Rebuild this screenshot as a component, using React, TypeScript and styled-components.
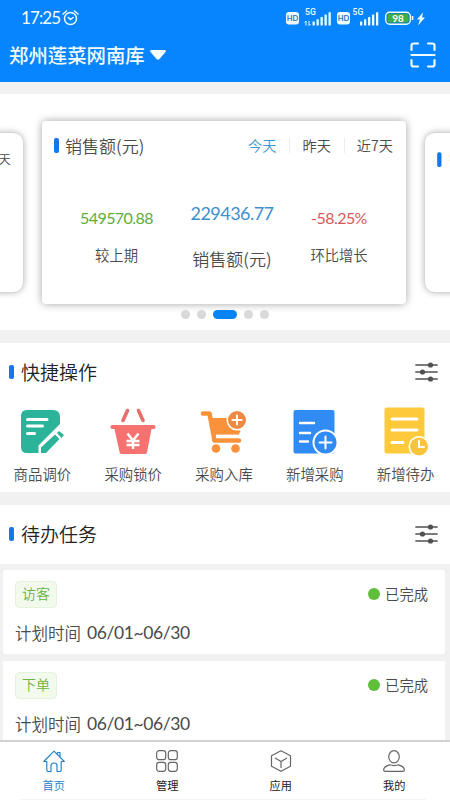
import React from 'react';
import styled, { createGlobalStyle, css } from 'styled-components';

const GlobalStyle = createGlobalStyle`
  * { box-sizing: border-box; }
  body { margin: 0; background: #f1f1f1; }
`;

const cjk = `'Noto Sans CJK SC', sans-serif`;
const latin = `Lato, 'Noto Sans CJK SC', sans-serif`;

const Screen = styled.div`
  width: 450px;
  height: 800px;
  overflow: hidden;
  display: flex;
  flex-direction: column;
  background: #f1f1f1;
  color: #4a4a4a;
  font-family: ${cjk};
  font-weight: 350;
  white-space: nowrap;
`;

const Header = styled.header`
  height: 82px;
  flex: none;
  background: #0784ff;
  color: #f2fcff;
`;

const StatusBar = styled.div`
  height: 34px;
  padding: 2px 24px 0 21px;
  display: flex;
  align-items: center;
`;

const Clock = styled.span`
  width: 38px;
  font: 400 17px/20px ${latin};
  letter-spacing: -0.9px;
  margin-right: 3px;
`;

const StatusIcons = styled.div`
  margin-left: auto;
  display: flex;
`;

const TitleBar = styled.div`
  height: 42px;
  padding: 0 14px 0 9px;
  display: flex;
  align-items: center;
  justify-content: space-between;
`;

const StoreName = styled.div`
  display: flex;
  align-items: center;
  gap: 5px;
  font-size: 19.4px;
  font-weight: 500;
  line-height: 28px;
`;

const Carousel = styled.section`
  margin-top: 12px;
  height: 236px;
  flex: none;
  background: #fff;
  overflow: hidden;
  padding-top: 27px;
`;

const Slides = styled.div`
  display: flex;
  justify-content: center;
  margin-left: -2px;
  height: 183px;
`;

type Side = 'left' | 'right';

const Slide = styled.article<{ $side?: Side }>`
  width: 364px;
  height: 183px;
  flex: none;
  background: #fff;
  border-radius: 4px;
  box-shadow: 0 0 9px rgba(0, 0, 0, 0.36);
  ${p => p.$side && css`
    margin: 0 -5px;
    transform: scale(0.868);
    border-radius: 11px;
  `}
`;

const SlideHead = styled.div<{ $side?: Side }>`
  display: flex;
  align-items: center;
  padding: ${p => (p.$side ? '7px 14px 0 14px' : '0 13px 0 12px')};
  gap: ${p => (p.$side ? 9 : 6)}px;
  height: ${p => (p.$side ? 53 : 49)}px;
`;

const Marker = styled.i<{ $h?: number }>`
  width: 5px;
  height: ${p => p.$h ?? 15}px;
  border-radius: 2px;
  background: #1877e8;
`;

const MetricName = styled.span`
  font-size: 17px;
  line-height: 24px;
`;

const Ranges = styled.div`
  margin-left: auto;
  display: flex;
  align-items: center;
  font-size: 14.2px;
  line-height: 20px;
  padding-bottom: 1px;
`;

const Range = styled.span<{ $active?: boolean }>`
  color: ${p => (p.$active ? '#3e96d2' : '#4a4a4a')};
  & + & {
    margin-left: 13px;
    padding-left: 13px;
    background: linear-gradient(#ececec, #ececec) left center / 1px 15px no-repeat;
  }
`;

const Metrics = styled.div`
  display: flex;
  padding-top: 31px;
`;

const Metric = styled.div<{ $w: number; $main?: boolean }>`
  width: ${p => p.$w}px;
  display: flex;
  flex-direction: column;
  align-items: center;
  font-size: ${p => (p.$main ? 17 : 14.3)}px;
  line-height: 20px;
  gap: ${p => (p.$main ? 26 : 17)}px;
  padding-top: ${p => (p.$main ? 2 : 7)}px;
`;

const Value = styled.span<{ $c: string; $size: number }>`
  color: ${p => p.$c};
  font: 400 ${p => p.$size}px/20px ${latin};
  letter-spacing: -0.55px;
`;

const Dots = styled.div`
  display: flex;
  gap: 7px;
  justify-content: center;
  margin-top: 6px;
`;

const Dot = styled.i<{ $on?: boolean }>`
  width: ${p => (p.$on ? 24 : 9)}px;
  height: 9px;
  border-radius: 5px;
  background: ${p => (p.$on ? '#0784f4' : '#d9d9d9')};
`;

const Panel = styled.section<{ $h: number }>`
  margin-top: 13px;
  height: ${p => p.$h}px;
  flex: none;
  background: #fff;
`;

const PanelHead = styled.div`
  height: 58px;
  padding: 0 12px 0 9px;
  display: flex;
  align-items: center;
  gap: 7px;
  svg { margin-left: auto; }
`;

const PanelTitle = styled.h2`
  margin: 0;
  color: #222;
  font-size: 19px;
  font-weight: 350;
  line-height: 28px;
`;

const Shortcuts = styled.div`
  display: flex;
  margin: 0 -1px 0 -3px;
`;

const Shortcut = styled.div`
  flex: 1;
  display: flex;
  flex-direction: column;
  align-items: center;
  padding-top: 3px;
  font-size: 14.4px;
  line-height: 20px;
  gap: 7px;
`;

const Task = styled.article`
  margin: 6px 5px 1px 3px;
  height: 84px;
  flex: none;
  padding: 11px 17px 0 12px;
  border-radius: 2px;
  background: #fff;
`;

const TaskTop = styled.div`
  display: flex;
  justify-content: space-between;
  align-items: center;
`;

const Tag = styled.span`
  width: 42px;
  height: 27px;
  border: 1px solid #e4f3dc;
  border-radius: 4px;
  background: #f2faee;
  color: #6ab342;
  font-size: 14px;
  line-height: 23px;
  text-align: center;
`;

const State = styled.span`
  display: flex;
  align-items: center;
  gap: 5px;
  padding-bottom: 2px;
  font-size: 14.3px;
  line-height: 20px;
  &::before {
    content: '';
    width: 12px;
    height: 12px;
    border-radius: 50%;
    background: #5fbf3b;
  }
`;

const Plan = styled.div`
  display: flex;
  gap: 6px;
  margin-top: 13px;
  font-size: 16.5px;
  line-height: 24px;
`;

const Dates = styled.span`
  font: 400 17.5px/24px ${latin};
  letter-spacing: -0.4px;
`;

const TabBar = styled.nav`
  position: fixed;
  left: 0;
  top: 740px;
  width: 450px;
  height: 60px;
  padding: 8px 0 0;
  border-top: 2px solid #d2d2d2;
  background: #fff;
  display: flex;
  overflow: hidden;
  &::after {
    content: '';
    position: absolute;
    left: 20px;
    right: 24px;
    bottom: 0;
    height: 1px;
    background: #f4f4f4;
  }
`;

const Tabs = styled.div`
  display: flex;
  width: 454px;
  flex: none;
  margin-left: -3px;
`;

const Tab = styled.div<{ $active?: boolean }>`
  flex: 1;
  display: flex;
  flex-direction: column;
  align-items: center;
  gap: 4px;
  font: 400 11.2px/18px ${cjk};
  color: ${p => (p.$active ? '#2585cc' : '#222')};
  svg { color: ${p => (p.$active ? '#2585cc' : '#666')}; }
`;

const Signal = ({ x, data }: { x: number; data?: boolean }) => (
  <g>
    <text x={x} y="10.5" fontFamily="Roboto" fontWeight="500" fontSize="8.6" fill="#eaffff">5G</text>
    {[0, 1, 2, 3, 4].map(i => (
      <rect key={i} x={x + 7.5 + i * 4} y={17 - i * 2.3} width="2.3" height={4 + i * 2.3} rx=".5" fill="#eaffff" />
    ))}
    {data && <path d={`M${x + 1} 16.500v4.500M${x + 4} 16.500v4.500M${x - 0.5} 18l1.500-1.500M${x + 5.5} 19.500l-1.500 1.500`} stroke="#eaffff" strokeWidth="1" />}
  </g>
);

const Hd = ({ x }: { x: number }) => (
  <g>
    <rect x={x} y="8" width="13" height="12.5" rx="3" fill="#f0fcff" />
    <text x={x + 6.5} y="17" textAnchor="middle" fontFamily="Lato" fontWeight="700" fontSize="7.5" fill="#2d75b8">HD</text>
  </g>
);

const StatusDrawing = () => (
  <svg width="141" height="28" viewBox="0 0 141 28" overflow="visible">
    <Hd x={1} />
    <g transform="translate(0 .5)"><Signal x={20} data /></g>
    <Hd x={52} />
    <g transform="translate(0 .5)"><Signal x={67.5} /></g>
    <rect x="100.700" y="8.200" width="24.600" height="12" rx="4" fill="#187bc4" stroke="#eaffff" strokeWidth="1.400" />
    <rect x="102.500" y="9.800" width="21" height="8.800" rx="2.300" fill="#3fae45" />
    <path d="M127.500 12v4" stroke="#eaffff" strokeWidth="1.700" />
    <text x="113" y="17.800" textAnchor="middle" fontFamily="Lato" fontWeight="700" fontSize="10" fill="#fff">98</text>
    <path d="M138 8.500l-6 7h3l-2 6 7-8h-3z" fill="#f4feff" />
  </svg>
);

const Alarm = () => (
  <svg width="18" height="18" viewBox="0 0 18 18" fill="none" stroke="#eaffff" strokeWidth="1.5" strokeLinecap="round">
    <circle cx="8.5" cy="9.5" r="6" />
    <path d="M1 5L4.500 2M16 5L12.500 2M6.300 8.500l2.200 2 2.500-2" />
  </svg>
);

const Scan = () => (
  <svg width="26" height="26" viewBox="0 0 26 26" fill="none" stroke="#f0fcff" strokeWidth="2.2" strokeLinecap="round">
    <path d="M1.500 8V3.500a2 2 0 0 1 2-2H8M18 1.500h4.500a2 2 0 0 1 2 2V8M24.500 18v4.500a2 2 0 0 1-2 2H18M8 24.500H3.500a2 2 0 0 1-2-2V18M1.500 13h23" />
  </svg>
);

const Sliders = () => (
  <svg width="23" height="20" viewBox="0 0 23 20" stroke="#505050" strokeWidth="1.7" strokeLinecap="round">
    <path d="M1 3h21M1 10h21M1 17h21" />
    <g fill="#505050" stroke="none"><circle cx="15.500" cy="3" r="2.600" /><circle cx="7.500" cy="10" r="2.600" /><circle cx="15.500" cy="17" r="2.600" /></g>
  </svg>
);

const shortcuts = [
  {
    name: '商品调价',
    art: <>
      <path d="M10 6h26q7 0 7 7v7L21.500 41.500V49H10q-6 0-6-6V12q0-6 6-6z" fill="#2cb49a" />
      <path d="M10.500 15.500h19.500M10.500 22h15M10.500 29.500h7" stroke="#fff" strokeWidth="3" strokeLinecap="round" />
      <path d="M24 49v-5.500L38 30.500l4.500 4.500L29 49zM40 29l2-2 5 4-2.500 3z" fill="#2cb49a" />
    </>,
  },
  {
    name: '采购锁价',
    art: <>
      <path d="M19.500 6.500l-4.500 10M30.500 6.500l4.500 10" stroke="#e56f6c" strokeWidth="3.600" strokeLinecap="round" />
      <path d="M4 21h42q1.500 0 1.500 2t-1.500 2h-2.500L39 48.500q-.5 1.500-2 1.500H14q-2 0-2.300-1.500L6.500 25H4q-1.500 0-1.500-2T4 21z" fill="#f57270" />
      <path d="M19.500 29.500l5.500 7 5.500-7M18.500 37h13M18.500 41h13M25 36v9" stroke="#fff" strokeWidth="2.500" fill="none" />
    </>,
  },
  {
    name: '采购入库',
    art: <>
      <path d="M4 9.500h6.500L15.500 36.500H40" fill="none" stroke="#fa923c" strokeWidth="4.500" strokeLinejoin="round" strokeLinecap="round" />
      <path d="M11.500 14H30q0 10 10 12l1.500 1-2 4H14z" fill="#fa923c" />
      <path d="M17 32h22" stroke="#fff" strokeWidth="2.800" />
      <circle cx="17" cy="44.500" r="4.300" fill="#fa923c" /><circle cx="36.500" cy="44.500" r="4.300" fill="#fa923c" />
      <circle cx="38" cy="16" r="10.500" fill="#fff" /><circle cx="38" cy="16" r="9" fill="#f08a43" />
      <path d="M33.500 16h9M38 11.500v9" stroke="#fff" strokeWidth="2" strokeLinecap="round" />
    </>,
  },
  {
    name: '新增采购',
    art: <>
      <rect x="3.500" y="6" width="41" height="43.500" rx="2" fill="#318bf5" />
      <path d="M10 19h14M10 29h10M10 37.500h8" stroke="#fff" strokeWidth="2.500" strokeLinecap="round" />
      <circle cx="35.500" cy="38.500" r="13" fill="#fff" /><circle cx="35.500" cy="38.500" r="11" fill="#318bf5" />
      <path d="M29.500 38.500h12M35.500 32.500v12" stroke="#fff" strokeWidth="2" strokeLinecap="round" />
    </>,
  },
  {
    name: '新增待办',
    art: <>
      <rect x="3.500" y="3.500" width="40" height="46" rx="2" fill="#fec93b" />
      <path d="M11 15h25M11 26h25M11 38.500h11" stroke="#fff" strokeWidth="3" strokeLinecap="round" />
      <circle cx="38" cy="42.500" r="10.500" fill="#fff" /><circle cx="38" cy="42.500" r="9" fill="#f9c33b" />
      <path d="M38 37v6H43" fill="none" stroke="#fff" strokeWidth="2" strokeLinecap="round" />
    </>,
  },
];

const tabs = [
  { name: '首页', art: <path d="M3.800 11.500H.7L11 1.200 21.300 11.500H18.200V20q0 1.500-1.500 1.500H14v-6q0-2.500-3-2.500t-3 2.500v6H5.300q-1.500 0-1.500-1.500zM14.500 4.500V2.500H17V7" /> },
  { name: '管理', art: <><rect x=".7" y=".7" width="9" height="9" rx="2.500" /><rect x="12.300" y=".7" width="9" height="9" rx="2.500" /><rect x=".7" y="12.300" width="9" height="9" rx="2.500" /><rect x="12.300" y="12.300" width="9" height="9" rx="2.500" /></> },
  { name: '应用', art: <path d="M11 .8l9.500 5v10.500L11 21.300l-9.500-5V5.800zM5 8l6 3.500L17 8M11 11.500V18" /> },
  { name: '我的', art: <><ellipse cx="11" cy="6.800" rx="5.300" ry="6.100" /><path d="M6.500 14.800Q.6 16.500.6 20q0 1.400 1.800 1.400h17.200q1.800 0 1.800-1.400 0-3.500-5.900-5.200-4.500 1.500-9 0z" /></> },
];

const SalesSlide = ({ side }: { side?: Side }) => (
  <Slide $side={side}>
    <SlideHead $side={side}>
      {side !== 'left' && <><Marker $h={side ? 17 : 15} /><MetricName>销售额(元)</MetricName></>}
      {side === 'left' && <Ranges><Range>近7天</Range></Ranges>}
      {!side && <Ranges><Range $active>今天</Range><Range>昨天</Range><Range>近7天</Range></Ranges>}
    </SlideHead>
    {!side && (
      <Metrics>
        <Metric $w={149}><Value $c="#5dad3a" $size={16}>549570.88</Value>较上期</Metric>
        <Metric $w={82} $main><Value $c="#3e8fce" $size={18}>229436.77</Value>销售额(元)</Metric>
        <Metric $w={132}><Value $c="#d75a5a" $size={16}>-58.25%</Value>环比增长</Metric>
      </Metrics>
    )}
  </Slide>
);

export default function App() {
  return (
    <Screen>
      <GlobalStyle />
      <Header>
        <StatusBar>
          <Clock>17:25</Clock>
          <Alarm />
          <StatusIcons><StatusDrawing /></StatusIcons>
        </StatusBar>
        <TitleBar>
          <StoreName>
            郑州莲菜网南库
            <svg width="16" height="10" viewBox="0 0 16 10"><path d="M1 0h14q1.500.5.5 2L9.500 9Q8 10.500 6.500 9L.5 2Q-.5.5 1 0z" fill="#f8ffff" /></svg>
          </StoreName>
          <Scan />
        </TitleBar>
      </Header>
      <Carousel>
        <Slides><SalesSlide side="left" /><SalesSlide /><SalesSlide side="right" /></Slides>
        <Dots><Dot /><Dot /><Dot $on /><Dot /><Dot /></Dots>
      </Carousel>
      <Panel $h={149}>
        <PanelHead><Marker $h={14} /><PanelTitle>快捷操作</PanelTitle><Sliders /></PanelHead>
        <Shortcuts>
          {shortcuts.map(s => (
            <Shortcut key={s.name}>
              <svg width="50" height="53" viewBox="0 0 50 53" fill="none">{s.art}</svg>
              {s.name}
            </Shortcut>
          ))}
        </Shortcuts>
      </Panel>
      <Panel $h={59}>
        <PanelHead><Marker $h={14} /><PanelTitle>待办任务</PanelTitle><Sliders /></PanelHead>
      </Panel>
      {['访客', '下单'].map(t => (
        <Task key={t}>
          <TaskTop><Tag>{t}</Tag><State>已完成</State></TaskTop>
          <Plan>计划时间<Dates>06/01~06/30</Dates></Plan>
        </Task>
      ))}
      <TabBar>
        <Tabs>
          {tabs.map((t, i) => (
            <Tab key={t.name} $active={i === 0}>
              <svg width="22" height="22" viewBox="0 0 22 22" fill="none" stroke="currentColor" strokeWidth="1.200" strokeLinejoin="round">{t.art}</svg>
              <span>{t.name}</span>
            </Tab>
          ))}
        </Tabs>
      </TabBar>
    </Screen>
  );
}
